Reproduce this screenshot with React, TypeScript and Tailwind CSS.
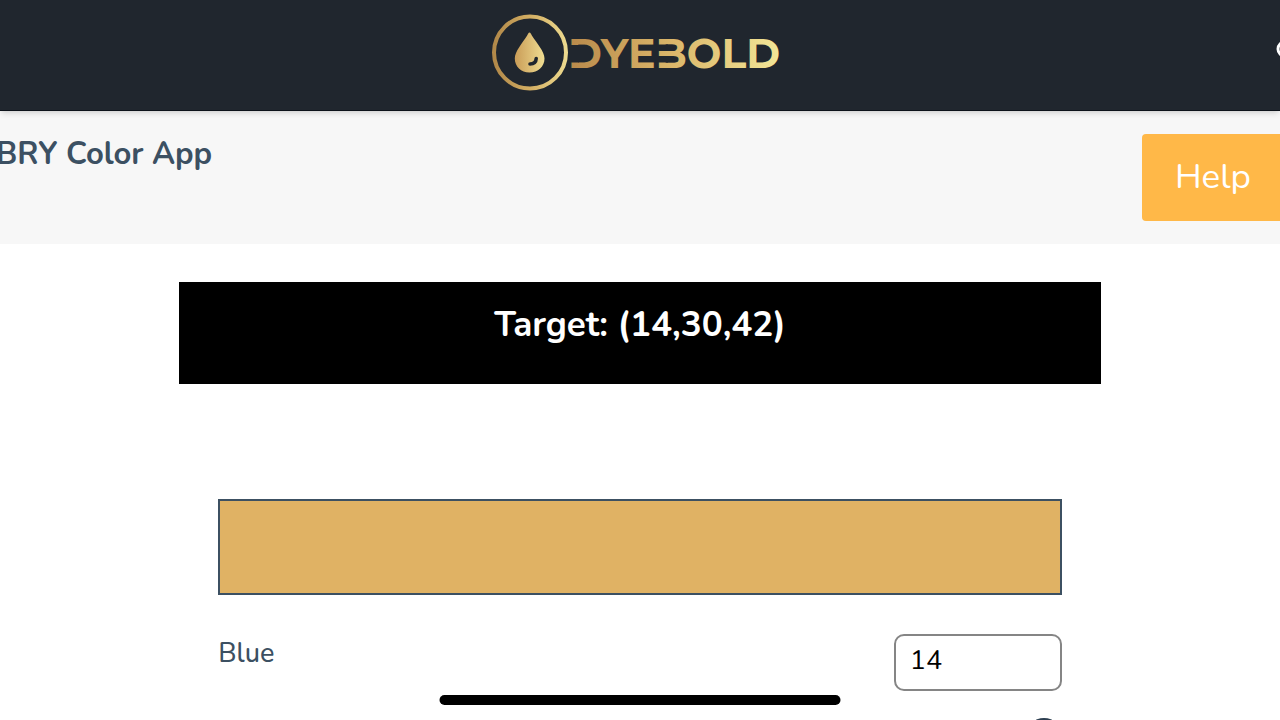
import { useState } from "react";
import { Plus } from "lucide-react";

function Logo() {
  return (
    <a href="#home" aria-label="Dyebold" className="block">
      <svg width="300" height="78" viewBox="0 0 300 78" fill="none">
        <defs>
          <linearGradient id="ring" x1="0" y1="0" x2="1" y2="0">
            <stop offset="0" stopColor="#b18849" />
            <stop offset="0.5" stopColor="#d3ae63" />
            <stop offset="1" stopColor="#ecd98e" />
          </linearGradient>
          <linearGradient id="drop" x1="0" y1="0" x2="1" y2="0">
            <stop offset="0" stopColor="#c99c57" />
            <stop offset="1" stopColor="#f0dd92" />
          </linearGradient>
          <linearGradient id="word" gradientUnits="userSpaceOnUse" x1="80" y1="0" x2="288" y2="0">
            <stop offset="0" stopColor="#b98a4b" />
            <stop offset="0.5" stopColor="#dbb76b" />
            <stop offset="1" stopColor="#f2e596" />
          </linearGradient>
        </defs>
        <circle cx="40" cy="38.500" r="36" stroke="url(#ring)" strokeWidth="4" />
        <path
          d="M39.500 18.500C38.500 18.500 38 20 37 21.800C32.500 29 24.800 37.500 24.800 44.500C24.800 52.500 31 58.500 39.500 58.500S54.500 52.500 54.500 44.500C54.500 37.500 46.500 29 42 21.800C41 20 40.500 18.500 39.500 18.500Z"
          fill="url(#drop)"
        />
        <path d="M46.200 44.500C46 48 43.500 50 40 50" stroke="#20262e" strokeWidth="3.600" strokeLinecap="round" />
        <text x="78" y="54" fill="url(#word)" className="font-['Montserrat','Nunito',sans-serif] text-[41px] font-bold">
          DYEBOLD
        </text>
        {/* the first D and the B have no stem */}
        <rect x="78" y="31" width="11" height="17.500" fill="#20262e" />
        <rect x="166" y="30.500" width="12" height="6.500" fill="#20262e" />
        <rect x="166" y="42" width="12" height="6.500" fill="#20262e" />
      </svg>
    </a>
  );
}

export default function App() {
  const [blue, setBlue] = useState("14");

  return (
    <div className="relative h-screen overflow-hidden bg-white font-['Nunito','Lato',sans-serif] text-[#3c5062]">
      <header className="relative flex h-[111px] justify-center border-b border-[#0c1219] bg-[#20262e] pt-3.5 shadow-md">
        <Logo />
        <button aria-label="Search" className="absolute top-10 -right-4 text-white">
          <svg width="20" height="20" viewBox="0 0 20 20" fill="none" stroke="currentColor" strokeWidth="3">
            <circle cx="9" cy="9" r="7" />
            <path d="M14 14l5 5" />
          </svg>
        </button>
      </header>

      <section className="-mx-1 flex h-[133px] items-start justify-between bg-[#f7f7f7] pt-[23px]">
        <h1 className="text-[31px] leading-10 font-bold">BRY Color App</h1>
        <button className="h-[87px] rounded bg-[#ffb848] px-[33px] text-[35px] text-white">Help</button>
      </section>

      <main className="mx-auto w-[72%] pt-[38px]">
        <h2 className="h-[102px] bg-black pt-5 text-center text-[35px] leading-[46px] font-bold text-white">
          Target: (14,30,42)
        </h2>

        <div className="px-[39px] pt-[115px]">
          <div className="h-24 border-2 border-[#3c5062] bg-[#e0b264]" />

          <div className="flex items-start justify-between pt-[39px]">
            <label htmlFor="blue" className="text-[27px] leading-10 font-medium">
              Blue
            </label>
            <input
              id="blue"
              inputMode="numeric"
              value={blue}
              onChange={(e) => setBlue(e.target.value)}
              className="h-[57px] w-[168px] rounded-[10px] border-2 border-[#858585] px-3.5 pb-1 text-[27px] text-black"
            />
          </div>

          <div className="flex justify-end pt-[27px]">
            <button aria-label="Add blue" className="flex size-9 items-center justify-center rounded-full bg-[#2c3e50] text-white">
              <Plus className="size-5" />
            </button>
          </div>
        </div>
      </main>

      <div className="absolute bottom-[15px] left-1/2 h-2.5 w-[401px] -translate-x-1/2 rounded-full bg-black" />
    </div>
  );
}
